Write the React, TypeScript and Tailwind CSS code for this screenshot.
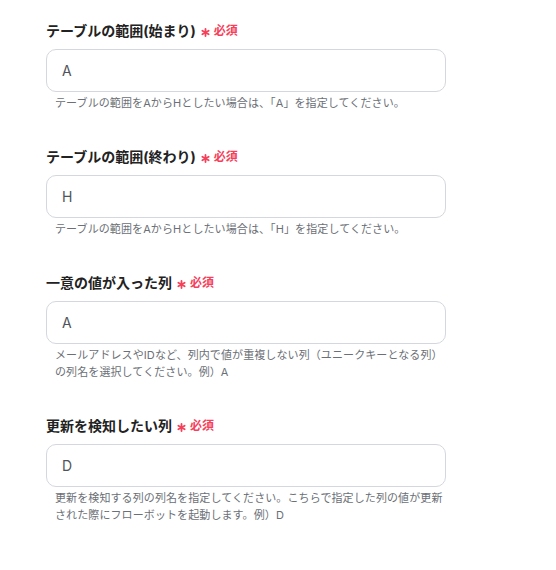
const fields = [
  {
    label: "テーブルの範囲(始まり)",
    value: "A",
    help: "テーブルの範囲をAからHとしたい場合は、「A」を指定してください。",
  },
  {
    label: "テーブルの範囲(終わり)",
    value: "H",
    help: "テーブルの範囲をAからHとしたい場合は、「H」を指定してください。",
  },
  {
    label: "一意の値が入った列",
    value: "A",
    help: "メールアドレスやIDなど、列内で値が重複しない列（ユニークキーとなる列）の列名を選択してください。例）A",
  },
  {
    label: "更新を検知したい列",
    value: "D",
    help: "更新を検知する列の列名を指定してください。こちらで指定した列の値が更新された際にフローボットを起動します。例）D",
  },
];

function RequiredMark() {
  return (
    <span className="ml-[5px] flex items-center gap-[4px] text-[#f5405a]">
      <svg width="9" height="9" viewBox="0 0 10 10" className="mt-[3px]">
        <g stroke="currentColor" strokeWidth="2" strokeLinecap="round">
          <line x1="5" y1="1" x2="5" y2="9" />
          <line x1="1.5" y1="3" x2="8.5" y2="7" />
          <line x1="1.5" y1="7" x2="8.5" y2="3" />
        </g>
      </svg>
      <span className="text-[12px] font-bold leading-[16px]">必須</span>
    </span>
  );
}

export default function App() {
  return (
    <div
      className="min-h-screen bg-white pt-[21px] pl-[46px]"
      style={{ fontFamily: 'Inter, "Noto Sans CJK JP", sans-serif' }}
    >
      <div className="flex w-[400px] flex-col gap-[35px]">
        {fields.map((f) => (
          <div key={f.label} className="flex flex-col">
            <div className="flex h-[20px] items-center">
              <span className="text-[14px] font-bold leading-[20px] text-[#222222]">
                {f.label}
              </span>
              <RequiredMark />
            </div>
            <div className="mt-[8px] flex h-[43px] items-center rounded-[10px] border border-[#d4d7dd] px-[15px] text-[14px] text-[#505359]">
              {f.value}
            </div>
            <p className="mt-[3px] pl-[9px] text-[11px] leading-[17px] tracking-[0.1px] text-[#6b6f76]">
              {f.help}
            </p>
          </div>
        ))}
      </div>
    </div>
  );
}
